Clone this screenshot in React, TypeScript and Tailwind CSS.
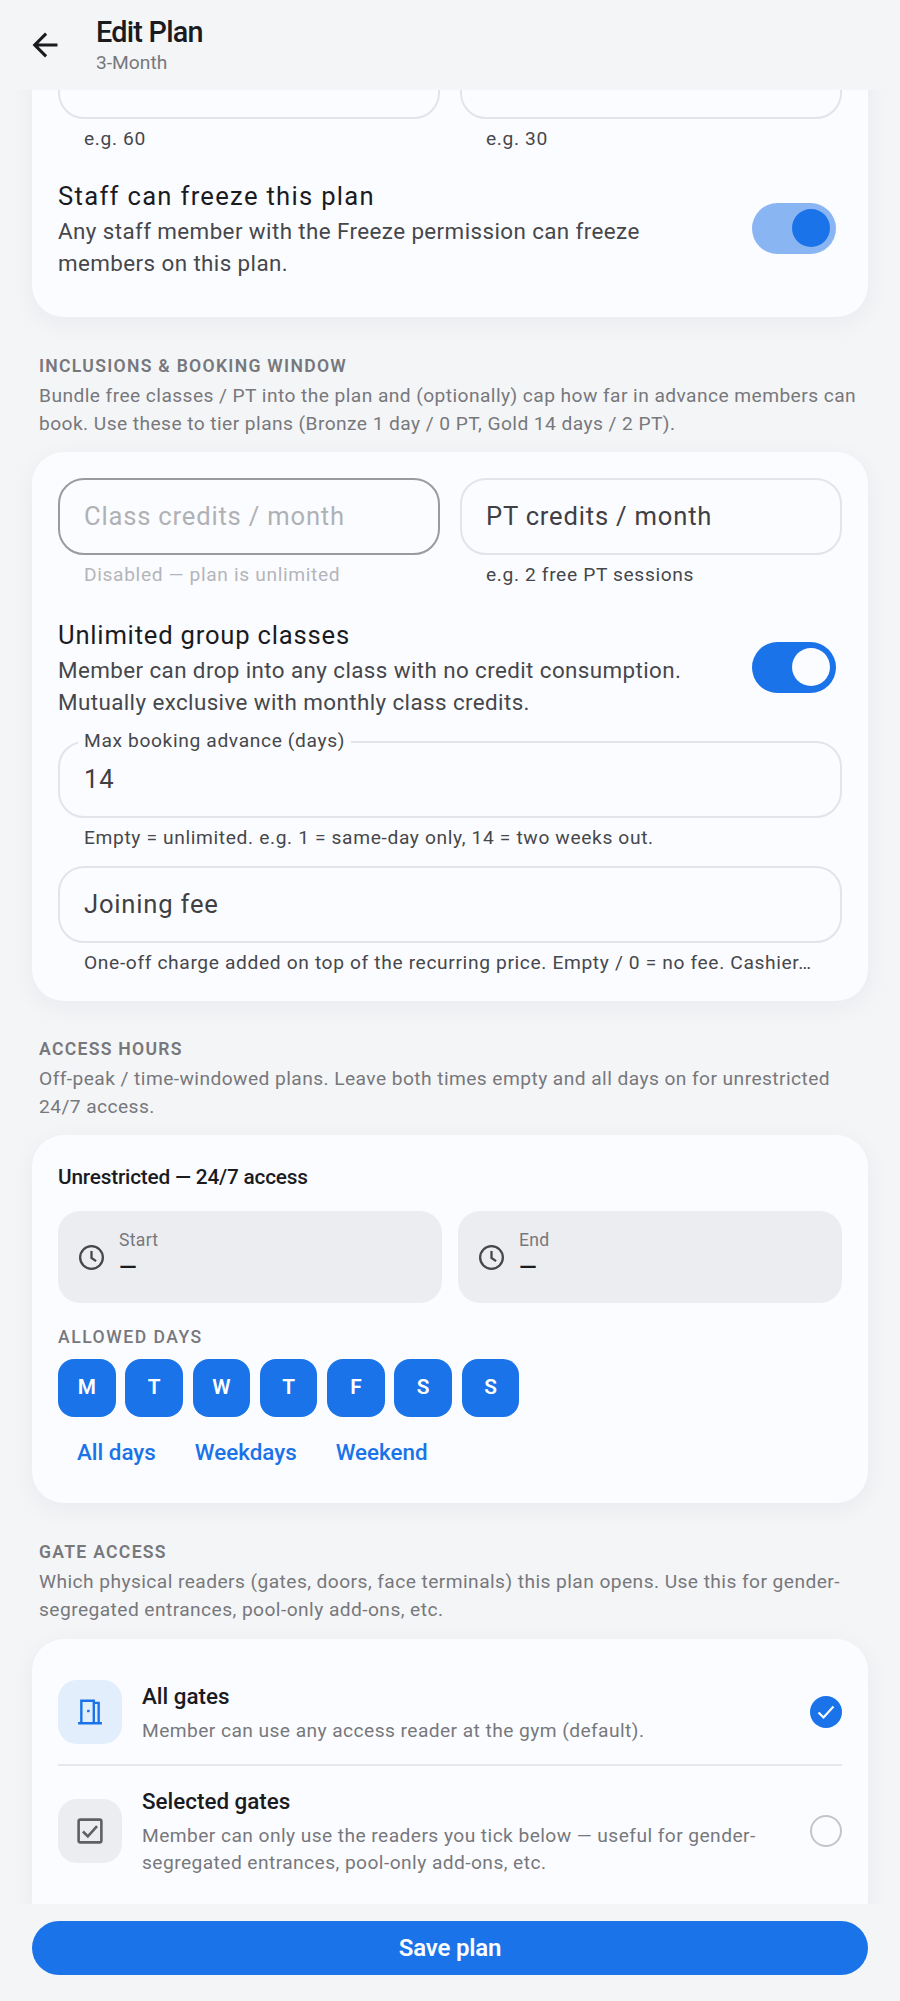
import { ReactNode } from "react"

const Toggle = ({ faded }: { faded?: boolean }) => (
    <div className={`flex h-[51px] w-[84px] shrink-0 items-center justify-end rounded-full pr-[6px] ${faded ? "bg-[#8ab5f3]" : "bg-[#1a73e8]"}`}>
        <div className={`h-[38px] w-[38px] rounded-full ${faded ? "bg-[#1a73e8]" : "bg-[#fbfcff]"}`} />
    </div>
)

const Helper = ({ children, muted }: { children: ReactNode; muted?: boolean }) => (
    <p className={`mt-[6px] truncate px-[26px] text-[19.2px] leading-[27px] tracking-[0.64px] ${muted ? "text-[#b4b5b9]" : "text-[#46474b]"}`}>{children}</p>
)

const Field = ({ label, disabled, className }: { label: string; disabled?: boolean; className?: string }) => (
    <div className={`flex h-[77px] items-center rounded-[26px] border-2 px-[24px] text-[25.6px] tracking-[0.8px] ${disabled ? "border-[#9a9b9f] text-[#b0b1b5]" : "border-[#e3e4ea] text-[#3f4044]"} ${className ?? ""}`}>
        {label}
    </div>
)

const ToggleRow = ({ title, lines, faded, wide }: { title: string; lines: string[]; faded?: boolean; wide?: boolean }) => (
    <div className="flex items-center justify-between pr-[6px]">
        <div>
            <p className={`text-[25.6px] leading-[38px] text-[#1a1b1f] ${wide ? "tracking-[1.3px]" : "tracking-[0.8px]"}`}>{title}</p>
            {lines.map((l) => (
                <p key={l} className="text-[22.4px] leading-[32px] tracking-[0.4px] text-[#46474b]">{l}</p>
            ))}
        </div>
        <Toggle faded={faded} />
    </div>
)

const Section = ({ title, lines }: { title: string; lines: string[] }) => (
    <div className="px-[7px]">
        <p className="mb-[3px] text-[17.6px] leading-[26px] font-semibold tracking-[1.28px] text-[#77787c]">{title}</p>
        {lines.map((l) => (
            <p key={l} className="text-[19.2px] leading-[27.5px] tracking-[0.43px] text-[#77787c]">{l}</p>
        ))}
    </div>
)

const Card = ({ children, className }: { children: ReactNode; className?: string }) => (
    <div className={`rounded-[32px] bg-[#fbfcff] shadow-[0_6px_24px_rgba(30,35,60,0.05)] ${className ?? ""}`}>{children}</div>
)

const ClockIcon = () => (
    <svg width="29" height="29" viewBox="0 0 24 24" fill="none" stroke="#46474b" strokeWidth="1.9" className="shrink-0">
        <circle cx="12" cy="12" r="9.4" />
        <path d="M12 6.6V12.4L15.8 15" />
    </svg>
)

const TimeBox = ({ label }: { label: string }) => (
    <div className="flex h-[92px] w-[384px] items-center gap-[13px] rounded-[22px] bg-[#ecedf0] pl-[19px]">
        <ClockIcon />
        <div>
            <p className="text-[17.6px] leading-[22px] tracking-[0.3px] text-[#77787c]">{label}</p>
            <p className="h-[34px] text-[23px] leading-[34px] font-medium text-[#1a1b1f]">—</p>
        </div>
    </div>
)

const DoorIcon = () => (
    <svg width="26" height="26" viewBox="0 0 24 24" fill="none" stroke="#1a73e8" strokeWidth="2.2">
        <path d="M1 22.4H23M4 22.4V1.6H15.5V22.4M15.5 3.6H20V22.4" />
        <path d="M10.5 10V12.2" strokeWidth="2.4" />
    </svg>
)

const CheckboxIcon = () => (
    <svg width="26" height="26" viewBox="0 0 24 24" fill="none" stroke="#5f6064" strokeWidth="2.4">
        <rect x="1.5" y="1.5" width="21" height="21" rx="1.6" />
        <path d="M5.5 12.5L10 17L18.5 7.5" />
    </svg>
)

const GateRow = ({ icon, tone, title, lines, checked }: { icon: ReactNode; tone: string; title: string; lines: string[]; checked?: boolean }) => (
    <div className="flex items-center">
        <div className={`flex h-[64px] w-[64px] shrink-0 items-center justify-center rounded-[19px] ${tone}`}>{icon}</div>
        <div className="ml-[20px] flex-1">
            <p className="mb-[5px] text-[22.4px] leading-[32px] font-medium text-[#1a1b1f]">{title}</p>
            {lines.map((l) => (
                <p key={l} className="text-[19.2px] leading-[27px] tracking-[0.43px] text-[#77787c]">{l}</p>
            ))}
        </div>
        {checked ? (
            <div className="flex h-[32px] w-[32px] items-center justify-center rounded-full bg-[#1a73e8]">
                <svg width="24" height="24" viewBox="0 0 24 24" fill="none" stroke="#fbfcff" strokeWidth="2.2">
                    <path d="M4.5 12.5L9.5 17.5L19.5 6.5" />
                </svg>
            </div>
        ) : (
            <div className="h-[32px] w-[32px] rounded-full border-2 border-[#c4c5ca]" />
        )}
    </div>
)

export default function App() {
    const days = ["M", "T", "W", "T", "F", "S", "S"]

    return (
        <div className="flex h-[2001px] w-[900px] flex-col overflow-hidden bg-[#f4f5f7] font-['Roboto',sans-serif]">
            <header className="z-10 flex h-[90px] shrink-0 items-center bg-[#f4f5f7] pl-[32px]">
                <svg width="26" height="26" viewBox="0 0 24 24" fill="#1a1b1f">
                    <path d="M23 10.6H5.4L13.5 2.5L11.5 0.5L0 12L11.5 23.5L13.5 21.5L5.4 13.4H23V10.6Z" transform="translate(0.5 0)" />
                </svg>
                <div className="-mt-[2px] ml-[38px]">
                    <h1 className="text-[28.8px] leading-[36px] font-medium tracking-[-0.75px] text-[#1a1b1f]">Edit Plan</h1>
                    <p className="text-[19.2px] leading-[25px] text-[#77787c]">3-Month</p>
                </div>
            </header>

            <main className="min-h-0 flex-1 overflow-hidden px-[32px]">
                <div className="-mt-[78px]">
                    <Card className="px-[26px] pt-[30px] pb-[38px]">
                        <div className="grid grid-cols-2 gap-[20px]">
                            <div>
                                <Field label="" />
                                <Helper>e.g. 60</Helper>
                            </div>
                            <div>
                                <Field label="" />
                                <Helper>e.g. 30</Helper>
                            </div>
                        </div>
                        <div className="mt-[25px]">
                            <ToggleRow title="Staff can freeze this plan" lines={["Any staff member with the Freeze permission can freeze", "members on this plan."]} faded wide />
                        </div>
                    </Card>

                    <div className="mt-[36px]">
                        <Section title="INCLUSIONS & BOOKING WINDOW" lines={["Bundle free classes / PT into the plan and (optionally) cap how far in advance members can", "book. Use these to tier plans (Bronze 1 day / 0 PT, Gold 14 days / 2 PT)."]} />
                    </div>
                    <Card className="mt-[15px] px-[26px] pt-[26px] pb-[25px]">
                        <div className="grid grid-cols-2 gap-[20px]">
                            <div>
                                <Field label="Class credits / month" disabled />
                                <Helper muted>Disabled — plan is unlimited</Helper>
                            </div>
                            <div>
                                <Field label="PT credits / month" />
                                <Helper>e.g. 2 free PT sessions</Helper>
                            </div>
                        </div>
                        <div className="mt-[28px]">
                            <ToggleRow title="Unlimited group classes" lines={["Member can drop into any class with no credit consumption.", "Mutually exclusive with monthly class credits."]} />
                        </div>
                        <div className="relative mt-[23px]">
                            <Field label="14" />
                            <span className="absolute top-[-14px] left-[20px] bg-[#fbfcff] px-[6px] text-[19.2px] leading-[27px] tracking-[0.64px] text-[#46474b]">Max booking advance (days)</span>
                        </div>
                        <Helper>Empty = unlimited. e.g. 1 = same-day only, 14 = two weeks out.</Helper>
                        <Field label="Joining fee" className="mt-[15px]" />
                        <Helper>One-off charge added on top of the recurring price. Empty / 0 = no fee. Cashier…</Helper>
                    </Card>

                    <div className="mt-[35px]">
                        <Section title="ACCESS HOURS" lines={["Off-peak / time-windowed plans. Leave both times empty and all days on for unrestricted", "24/7 access."]} />
                    </div>
                    <Card className="mt-[15px] px-[26px] pt-[26px] pb-[35px]">
                        <p className="text-[20.8px] leading-[32px] font-medium tracking-[-0.2px] text-[#1a1b1f]">Unrestricted — 24/7 access</p>
                        <div className="mt-[18px] flex justify-between">
                            <TimeBox label="Start" />
                            <TimeBox label="End" />
                        </div>
                        <p className="mt-[22px] text-[17.6px] leading-[24px] font-medium tracking-[1.5px] text-[#77787c]">ALLOWED DAYS</p>
                        <div className="mt-[10px] flex gap-[9.7px]">
                            {days.map((d, i) => (
                                <div key={i} className="flex h-[58px] w-[57.6px] items-center justify-center rounded-[16px] bg-[#1a73e8] text-[20.8px] font-semibold text-white">{d}</div>
                            ))}
                        </div>
                        <div className="mt-[19px] flex gap-[39px] pl-[19px] text-[22.4px] leading-[32px] font-medium text-[#1a73e8]">
                            <span>All days</span>
                            <span>Weekdays</span>
                            <span>Weekend</span>
                        </div>
                    </Card>

                    <div className="mt-[36px]">
                        <Section title="GATE ACCESS" lines={["Which physical readers (gates, doors, face terminals) this plan opens. Use this for gender-", "segregated entrances, pool-only add-ons, etc."]} />
                    </div>
                    <Card className="mt-[16px] px-[26px] pt-[41px]">
                        <GateRow icon={<DoorIcon />} tone="bg-[#e3eefc]" title="All gates" lines={["Member can use any access reader at the gym (default)."]} checked />
                        <div className="mt-[20px] mb-[19px] h-[2px] bg-[#e6e7ec]" />
                        <GateRow icon={<CheckboxIcon />} tone="bg-[#ecedf0]" title="Selected gates" lines={["Member can only use the readers you tick below — useful for gender-", "segregated entrances, pool-only add-ons, etc."]} />
                        <div className="h-[60px]" />
                    </Card>
                </div>
            </main>

            <footer className="z-10 h-[97px] shrink-0 bg-[#f4f5f7] px-[32px] pt-[17px]">
                <button className="h-[54px] w-full rounded-full bg-[#1a73e8] text-[24px] font-semibold tracking-[-0.2px] text-[#fbfcff]">Save plan</button>
            </footer>
        </div>
    )
}
